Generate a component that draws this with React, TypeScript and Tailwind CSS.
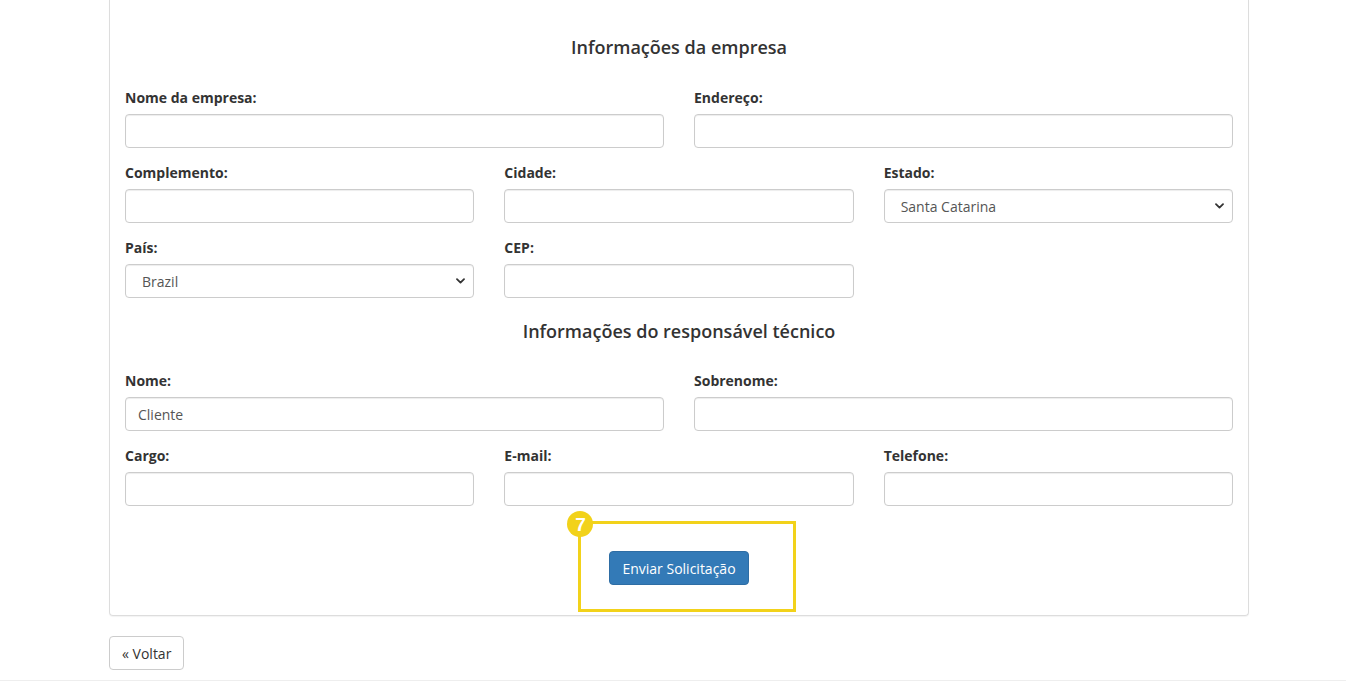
import type { ReactNode } from "react"

function Field({ label, children }: { label: string; children: ReactNode }) {
  return (
    <div className="mb-[15px] flex flex-col">
      <label className="mb-[6px] text-[14px] leading-5 font-bold text-[#333]">{label}</label>
      {children}
    </div>
  )
}

function TextInput({ value = "" }: { value?: string }) {
  return (
    <input
      type="text"
      defaultValue={value}
      className="h-[34px] w-full rounded-[4px] border border-[#ccc] bg-white px-3 text-[14px] text-[#555] shadow-[inset_0_1px_1px_rgba(0,0,0,0.075)] outline-none"
    />
  )
}

function Select({ value }: { value: string }) {
  return (
    <div className="relative">
      <select
        defaultValue={value}
        className="h-[34px] w-full appearance-none rounded-[4px] border border-[#ccc] bg-white pl-4 pr-8 text-[14px] text-[#555] shadow-[inset_0_1px_1px_rgba(0,0,0,0.075)] outline-none"
      >
        <option>{value}</option>
      </select>
      <svg
        className="pointer-events-none absolute top-1/2 right-[9px] -translate-y-1/2"
        width="9"
        height="6"
        viewBox="0 0 9 6"
      >
        <path d="M1 1.2 L4.5 4.6 L8 1.2" fill="none" stroke="#333" strokeWidth="1.8" strokeLinecap="round" strokeLinejoin="round" />
      </svg>
    </div>
  )
}

function Heading({ children, className = "" }: { children: ReactNode; className?: string }) {
  return (
    <h4 className={`text-center text-[18px] leading-5 font-semibold text-[#333] ${className}`}>
      {children}
    </h4>
  )
}

export default function App() {
  return (
    <div className="min-h-[681px] bg-white" style={{ fontFamily: "'Open Sans', 'Liberation Sans', sans-serif" }}>
      <div className="pl-[109px]">
        <div className="w-[1140px] rounded-b-[4px] border border-t-0 border-[#ddd] px-[15px] pt-[37px] pb-[30px] shadow-[0_1px_1px_rgba(0,0,0,0.05)]">
          <Heading className="mb-[31px]">Informações da empresa</Heading>

          <div className="grid grid-cols-2 gap-x-[30px]">
            <Field label="Nome da empresa:">
              <TextInput />
            </Field>
            <Field label="Endereço:">
              <TextInput />
            </Field>
          </div>

          <div className="grid grid-cols-3 gap-x-[30px]">
            <Field label="Complemento:">
              <TextInput />
            </Field>
            <Field label="Cidade:">
              <TextInput />
            </Field>
            <Field label="Estado:">
              <Select value="Santa Catarina" />
            </Field>
            <Field label="País:">
              <Select value="Brazil" />
            </Field>
            <Field label="CEP:">
              <TextInput />
            </Field>
          </div>

          <Heading className="mt-[8px] mb-[30px]">Informações do responsável técnico</Heading>

          <div className="grid grid-cols-2 gap-x-[30px]">
            <Field label="Nome:">
              <TextInput value="Cliente" />
            </Field>
            <Field label="Sobrenome:">
              <TextInput />
            </Field>
          </div>

          <div className="grid grid-cols-3 gap-x-[30px]">
            <Field label="Cargo:">
              <TextInput />
            </Field>
            <Field label="E-mail:">
              <TextInput />
            </Field>
            <Field label="Telefone:">
              <TextInput />
            </Field>
          </div>

          <div className="mt-[30px] flex justify-center">
            <div className="relative">
              <button className="h-[34px] rounded-[4px] border border-[#2e6da4] bg-[#337ab7] px-3 text-[14px] text-white">
                Enviar Solicitação
              </button>
              {/* annotation frame */}
              <div className="pointer-events-none absolute -top-[30px] -right-[47px] -bottom-[27px] -left-[31px] border-[3px] border-[#f2d21a]" />
              <div
                className="absolute -top-[40px] -left-[42px] flex h-[26px] w-[26px] items-center justify-center rounded-full bg-[#f2d21a] text-[19px] leading-none font-bold text-white"
                style={{ fontFamily: "'Liberation Sans', Arial, sans-serif" }}
              >
                7
              </div>
            </div>
          </div>
        </div>

        <button className="mt-[20px] h-[34px] rounded-[4px] border border-[#ccc] bg-white px-3 text-[14px] text-[#333]">
          « Voltar
        </button>
      </div>
      <div className="mt-[10px] border-t border-[#eee]" />
    </div>
  )
}
